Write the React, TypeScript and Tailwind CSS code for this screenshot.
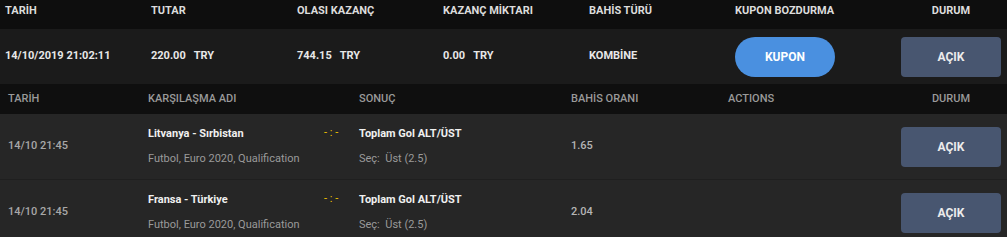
import React from "react";

const bets = [
  { date: "14/10 21:45", match: "Litvanya - Sırbistan", league: "Futbol, Euro 2020, Qualification", market: "Toplam Gol ALT/ÜST", pick: "Üst (2.5)", odds: "1.65" },
  { date: "14/10 21:45", match: "Fransa - Türkiye", league: "Futbol, Euro 2020, Qualification", market: "Toplam Gol ALT/ÜST", pick: "Üst (2.5)", odds: "2.04" },
];

function StatusButton() {
  return (
    <button className="w-[100px] h-[40px] rounded-[4px] bg-[#485670] text-[#ececec] font-bold text-[12px]">
      AÇIK
    </button>
  );
}

export default function App() {
  return (
    <div className="w-[1007px] h-[237px] overflow-hidden bg-[#1b1b1b] text-[11px] font-['Roboto',sans-serif]">
      {/* coupon header */}
      <div className="flex items-center h-[29px] pb-[6px] bg-[#0e0e0e] font-bold text-[#dcdcdc] pl-[5px]">
        <div className="w-[146px]">TARİH</div>
        <div className="w-[146px]">TUTAR</div>
        <div className="w-[146px]">OLASI KAZANÇ</div>
        <div className="w-[146px]">KAZANÇ MİKTARI</div>
        <div className="w-[146px]">BAHİS TÜRÜ</div>
        <div className="w-[166px]">KUPON BOZDURMA</div>
        <div className="w-[100px] text-center">DURUM</div>
      </div>

      {/* coupon row */}
      <div className="flex items-center h-[55px] bg-[#1b1b1b] font-bold text-[#e8e8e8] pl-[5px]">
        <div className="w-[146px]">14/10/2019 21:02:11</div>
        <div className="w-[146px]">220.00<span className="ml-[8px]">TRY</span></div>
        <div className="w-[146px]">744.15<span className="ml-[8px]">TRY</span></div>
        <div className="w-[146px]">0.00<span className="ml-[8px]">TRY</span></div>
        <div className="w-[146px]">KOMBİNE</div>
        <div className="w-[166px]">
          <button className="w-[100px] h-[40px] rounded-full bg-[#4a90e0] text-white font-bold text-[12px]">
            KUPON
          </button>
        </div>
        <StatusButton />
      </div>

      {/* selections header */}
      <div className="flex items-center h-[30px] bg-[#0f0f0f] font-medium text-[#9a9a9a] pl-[8px]">
        <div className="w-[140px]">TARİH</div>
        <div className="w-[211px]">KARŞILAŞMA ADI</div>
        <div className="w-[212px]">SONUÇ</div>
        <div className="w-[157px]">BAHİS ORANI</div>
        <div className="w-[173px]">ACTIONS</div>
        <div className="w-[100px] text-center">DURUM</div>
      </div>

      {bets.map((b, i) => (
        <div key={i} className="flex items-center h-[66px] bg-[#262626] border-b border-[#1f1f1f] pl-[8px]">
          <div className="w-[140px] text-[#a8a8a8] font-medium">{b.date}</div>
          <div className="w-[211px] flex items-start">
            <div className="flex-1">
              <div className="font-bold text-[#f0f0f0]">{b.match}</div>
              <div className="mt-[9px] text-[#9a9a9a]">{b.league}</div>
            </div>
            <div className="w-[35px] text-[#f5c400] whitespace-pre leading-[14px]">{"- : -"}</div>
          </div>
          <div className="w-[212px]">
            <div className="font-bold text-[#f0f0f0]">{b.market}</div>
            <div className="mt-[9px] text-[#9a9a9a] whitespace-pre">{"Seç:  " + b.pick}</div>
          </div>
          <div className="w-[157px] text-[#b5b5b5] font-medium">{b.odds}</div>
          <div className="w-[173px]"></div>
          <StatusButton />
        </div>
      ))}
    </div>
  );
}
